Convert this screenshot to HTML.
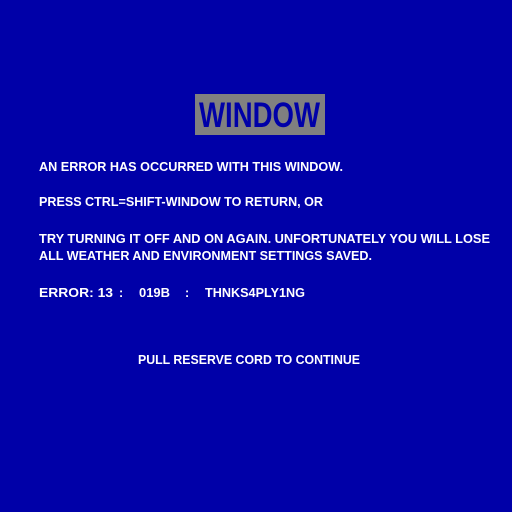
<!DOCTYPE html>
<html><head><style>
html,body{margin:0;padding:0;background:#0000a8;width:512px;height:512px;overflow:hidden}
svg{display:block}
text{font-family:"Liberation Sans",sans-serif;font-weight:bold;fill:#fff;font-size:12.5px}
</style></head><body>
<svg width="512" height="512" viewBox="0 0 512 512">
<rect width="512" height="512" fill="#0000a8"/>
<rect x="195" y="94" width="130" height="41" fill="#808080"/>
<text x="199" y="127" textLength="121" lengthAdjust="spacingAndGlyphs" style="font-size:35px;fill:#0000a8">WINDOW</text>
<text x="39" y="171" textLength="304" lengthAdjust="spacingAndGlyphs">AN ERROR HAS OCCURRED WITH THIS WINDOW.</text>
<text x="39" y="206" textLength="284" lengthAdjust="spacingAndGlyphs">PRESS CTRL=SHIFT-WINDOW TO RETURN, OR</text>
<text x="39" y="243" textLength="451" lengthAdjust="spacingAndGlyphs">TRY TURNING IT OFF AND ON AGAIN. UNFORTUNATELY YOU WILL LOSE</text>
<text x="39" y="260" textLength="333" lengthAdjust="spacingAndGlyphs">ALL WEATHER AND ENVIRONMENT SETTINGS SAVED.</text>
<text x="39" y="297" textLength="74" lengthAdjust="spacingAndGlyphs">ERROR: 13</text>
<text x="119" y="297">:</text>
<text x="139" y="297" textLength="31" lengthAdjust="spacingAndGlyphs">019B</text>
<text x="185" y="297">:</text>
<text x="205" y="297" textLength="100" lengthAdjust="spacingAndGlyphs">THNKS4PLY1NG</text>
<text x="138" y="364" textLength="222" lengthAdjust="spacingAndGlyphs">PULL RESERVE CORD TO CONTINUE</text>
</svg>
</body></html>
